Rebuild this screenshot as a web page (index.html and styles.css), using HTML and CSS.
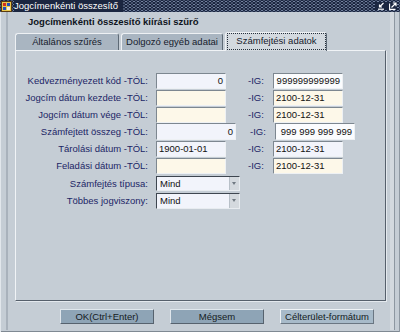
FILE: index.html
```html
<!DOCTYPE html>
<html lang="hu">
<head>
<meta charset="utf-8">
<title>Jogcímenkénti összesítő</title>
<link rel="stylesheet" href="styles.css">
</head>
<body>
<div class="win">
  <div class="titlebar">
    <svg class="appicon" width="11" height="11" viewBox="0 0 11 11">
      <rect x="0.5" y="0.5" width="10" height="10" fill="#e8c850" stroke="#5a3a10"/>
      <rect x="2" y="2" width="3" height="3" fill="#d03020"/>
      <rect x="6" y="2" width="3" height="3" fill="#2050c0"/>
      <rect x="2" y="6" width="3" height="3" fill="#2050c0"/>
      <rect x="6" y="6" width="3" height="3" fill="#f4f0e0"/>
    </svg>
    <span class="title">Jogcímenkénti összesítő</span>
    <div class="ctrls">
      <svg class="ctrl" width="8" height="8" viewBox="0 0 8 8">
        <path d="M6.5 1 L2.5 5 M2.5 2.5 V5 H5" stroke="#fff" stroke-width="1.2" fill="none"/>
        <path d="M1 7.2 H7" stroke="#fff" stroke-width="1.2"/>
      </svg>
      <svg class="ctrl" width="8" height="8" viewBox="0 0 8 8">
        <path d="M0.6 1.5 V7.4 H6.5" stroke="#fff" stroke-width="1.1" fill="none"/>
        <path d="M2.5 5.5 L7 1 M3.8 1 H7 V4.2" stroke="#fff" stroke-width="1.2" fill="none"/>
      </svg>
    </div>
  </div>
  <div class="client">
    <div class="frame">
      <div class="heading">Jogcímenkénti összesítő kiírási szűrő</div>
      <div class="tabs">
        <div class="tab t1">Általános szűrés</div>
        <div class="tab t2">Dolgozó egyéb adatai</div>
        <div class="tab t3 active"><span class="focus">Számfejtési adatok</span></div>
      </div>
      <div class="panel">
        <div class="row r1">
          <span class="lbl">Kedvezményezett kód -TÓL:</span>
          <div class="fld blue num">0</div>
          <span class="ig">-IG:</span>
          <div class="fld white num">999999999999</div>
        </div>
        <div class="row r2">
          <span class="lbl">Jogcím dátum kezdete -TÓL:</span>
          <div class="fld cream"></div>
          <span class="ig">-IG:</span>
          <div class="fld cream">2100-12-31</div>
        </div>
        <div class="row r3">
          <span class="lbl">Jogcím dátum vége -TÓL:</span>
          <div class="fld cream"></div>
          <span class="ig">-IG:</span>
          <div class="fld cream">2100-12-31</div>
        </div>
        <div class="row r4">
          <span class="lbl">Számfejtett összeg -TÓL:</span>
          <div class="fld blue num wide">0</div>
          <span class="ig ig-wide">-IG:</span>
          <div class="fld white num wide">999 999 999 999</div>
        </div>
        <div class="row r5">
          <span class="lbl">Tárolási dátum -TÓL:</span>
          <div class="fld blue">1900-01-01</div>
          <span class="ig">-IG:</span>
          <div class="fld blue">2100-12-31</div>
        </div>
        <div class="row r6">
          <span class="lbl">Feladási dátum -TÓL:</span>
          <div class="fld cream"></div>
          <span class="ig">-IG:</span>
          <div class="fld cream">2100-12-31</div>
        </div>
        <div class="row r7">
          <span class="lbl">Számfejtés típusa:</span>
          <div class="select"><span class="stext">Mind</span><span class="arrow"></span></div>
        </div>
        <div class="row r8">
          <span class="lbl">Többes jogviszony:</span>
          <div class="select"><span class="stext">Mind</span><span class="arrow"></span></div>
        </div>
      </div>
      <div class="buttons">
        <div class="btn">OK(Ctrl+Enter)</div>
        <div class="btn">Mégsem</div>
        <div class="btn focused">Célterület-formátum</div>
      </div>
    </div>
  </div>
</div>
</body>
</html>
```
FILE: styles.css
```css
* { box-sizing: border-box; }
html, body { margin: 0; padding: 0; }
body {
  width: 400px;
  height: 332px;
  overflow: hidden;
  font-family: "Liberation Sans", Arial, sans-serif;
  font-size: 9.5px;
  background: #c5cdd5;
}
.win {
  width: 400px;
  height: 332px;
  display: flex;
  flex-direction: column;
  background: #c5cdd5;
  box-shadow: inset 1px 0 #e2e7ec, inset -1px 0 #8e98a2, inset 0 -1px #7f8993;
}
.titlebar {
  height: 12px;
  flex: none;
  display: flex;
  align-items: center;
  padding: 0 3px 0 1px;
  background-color: #1b2640;
  background-image:
    radial-gradient(circle, #7382a0 0 0.7px, transparent 1px),
    radial-gradient(circle, #7382a0 0 0.7px, transparent 1px);
  background-size: 4px 3px, 4px 3px;
  background-position: 0 0, 2px 1.5px;
}
.appicon { flex: none; }
.title {
  color: #ffffff;
  margin-left: 2px;
  padding-right: 5px;
  line-height: 12px;
  background: #1b2640;
}
.ctrls {
  margin-left: auto;
  display: flex;
  gap: 4px;
  padding: 0 0 0 2px;
  background: #1b2640;
}
.ctrl { display: block; }
.client {
  flex: 1;
  display: flex;
  padding: 0 5px 2px 6px;
}
.frame {
  flex: 1;
  border-left: 2px solid #a9b2bc;
  border-right: 1px solid #8d97a1;
  box-shadow: inset -4px 0 #d3d9df;
  padding-left: 7px;
}
.heading {
  margin: 3px 0 0 13px;
  height: 13px;
  line-height: 13px;
  font-weight: bold;
  color: #0e1420;
}
.tabs {
  margin-top: 4px;
  height: 18px;
  display: flex;
  align-items: flex-end;
  position: relative;
  z-index: 2;
}
.tab {
  height: 17px;
  line-height: 15px;
  text-align: center;
  color: #16202c;
  background: #a9b5c1;
  border: 1px solid;
  border-color: #eef1f4 #5e6a76 transparent #eef1f4;
  border-bottom: none;
  border-radius: 3px 3px 0 0;
}
.t1 { width: 104px; }
.t2 { width: 102px; margin-left: 2px; }
.t3 { width: 102px; margin-left: 2px; }
.tab.active {
  height: 19px;
  margin-bottom: -1px;
  background: #d3d9df;
  padding: 1px 1px 2px 2px;
  line-height: 14px;
}
.focus {
  display: block;
  height: 100%;
  outline: 1px dotted #26303c;
  line-height: 14px;
}
.panel {
  width: 371px;
  height: 251px;
  background: #c5cdd5;
  border: 1px solid;
  border-color: #f0f3f6 #56606c #56606c #f0f3f6;
  box-shadow: 1px 1px 0 #e4e9ee;
  padding-top: 22px;
}
.row {
  display: flex;
  align-items: flex-start;
}
.r1, .r2, .r5, .r7 { height: 17px; }
.r3 { height: 16px; }
.r4, .r6 { height: 18px; }
.r8 { height: 17px; }
.lbl {
  width: 132px;
  text-align: right;
  color: #1c2566;
  line-height: 16px;
  white-space: nowrap;
}
.fld {
  width: 70px;
  height: 16px;
  margin-left: 8px;
  line-height: 14px;
  padding: 0 2px;
  color: #111;
  border: 1px solid;
  border-color: #7d8790 #eef1f4 #eef1f4 #7d8790;
  white-space: nowrap;
  overflow: hidden;
}
.r1 .fld + .ig + .fld { margin-left: 0; }
.ig {
  width: 25px;
  margin-left: 22px;
  line-height: 16px;
  color: #1c2566;
}
.ig + .fld { margin-left: 0; }
.fld.wide { width: 80px; height: 17px; line-height: 15px; }
.ig.ig-wide { margin-left: 14px; line-height: 17px; }
.r4 .lbl { line-height: 17px; }
.num { text-align: right; }
.blue { background: #f2f4fb; }
.white { background: #fbfcfe; }
.cream { background: #fdf8e9; }
.select {
  width: 84px;
  height: 15px;
  margin-left: 8px;
  display: flex;
  background: #f2f4fb;
  border: 1px solid;
  border-color: #3e4650 #e8ecf0 #e8ecf0 #3e4650;
}
.r8 .select { height: 16px; }
.r7 .lbl { line-height: 15px; }
.stext {
  flex: 1;
  padding-left: 3px;
  line-height: 13px;
  color: #111;
}
.r8 .stext { line-height: 14px; }
.arrow {
  width: 10px;
  background: #d4d9de;
  border-left: 1px solid #b8c0c8;
  position: relative;
}
.arrow::after {
  content: "";
  position: absolute;
  left: 2px;
  top: 5px;
  border-left: 2.5px solid transparent;
  border-right: 2.5px solid transparent;
  border-top: 3px solid #707982;
}
.buttons {
  margin-top: 8px;
  padding-left: 45px;
  display: flex;
  gap: 16px;
}
.btn {
  width: 94px;
  height: 15px;
  line-height: 13px;
  text-align: center;
  color: #141a22;
  background: #8ea4b6;
  border: 1px solid;
  border-color: #dfe6ec #56626e #56626e #dfe6ec;
}
.btn.focused {
  background: #a7bac9;
  border-color: #eef2f5 #6a7682 #6a7682 #eef2f5;
}
```
